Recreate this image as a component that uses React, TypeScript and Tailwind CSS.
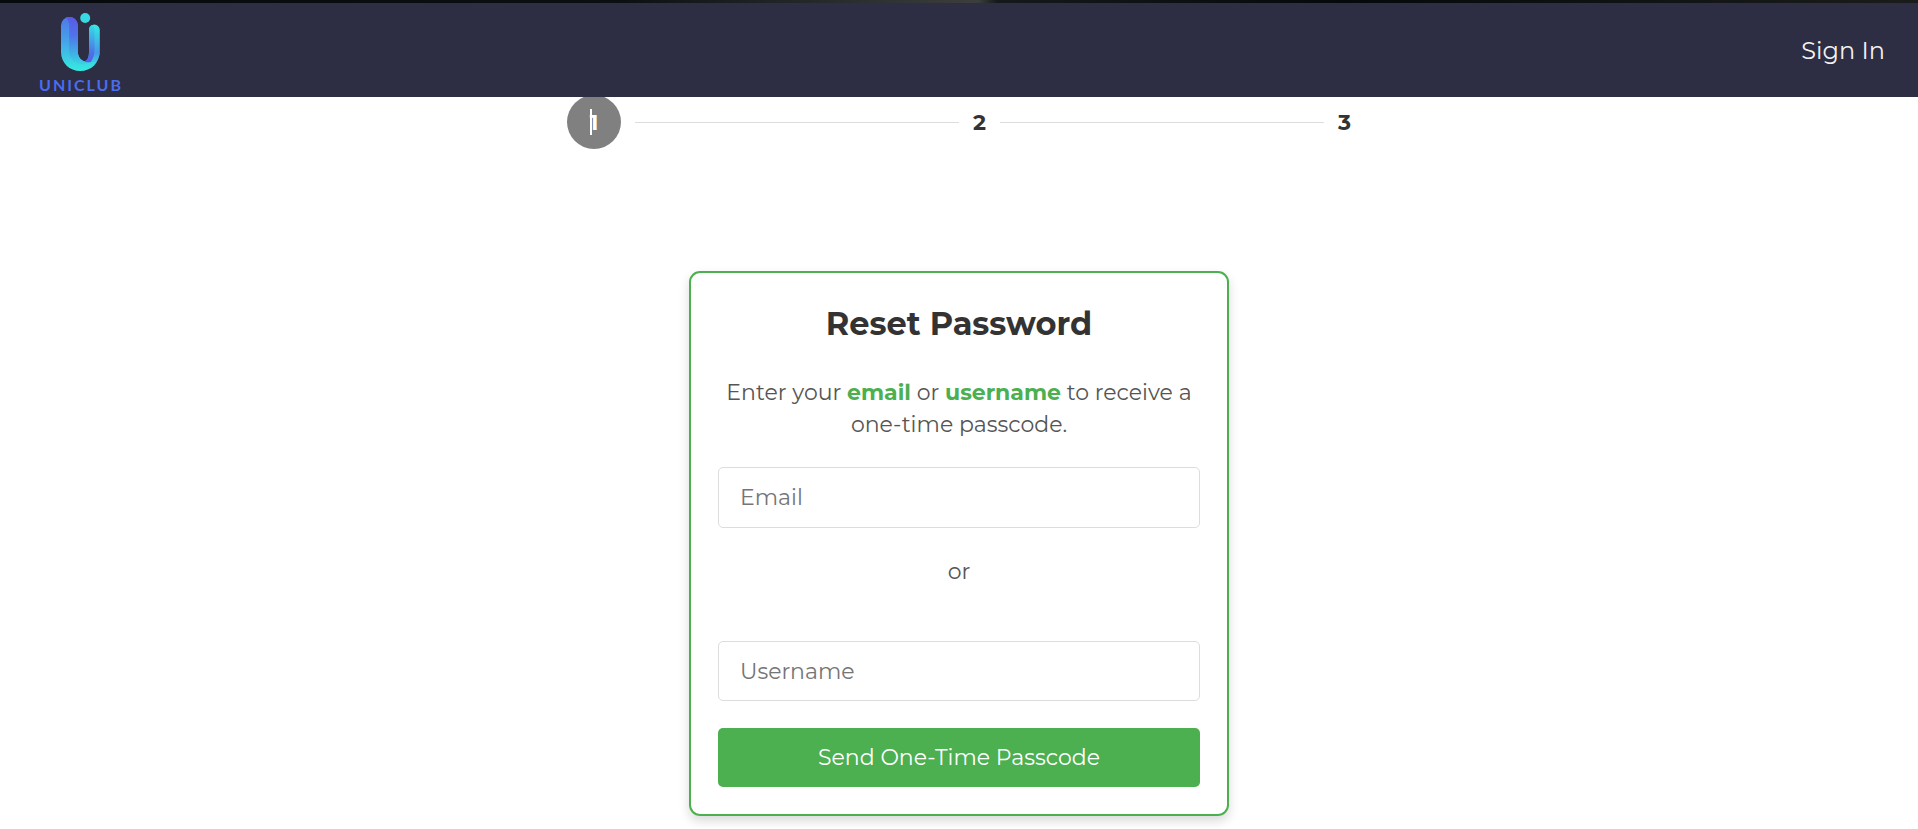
const steps = ["1", "2", "3"];

function Logo() {
  return (
    <a href="#" aria-label="Uniclub home" className="flex flex-col items-center pt-1.5">
      <svg viewBox="0 0 40 58" className="h-[58px] w-10" aria-hidden="true">
        <defs>
          <linearGradient id="body" x1="0" y1="0" x2="0" y2="1">
            <stop offset="0" stopColor="#4f78e8" />
            <stop offset="0.45" stopColor="#45a4e8" />
            <stop offset="1" stopColor="#35ebe0" />
          </linearGradient>
          <linearGradient id="stem" x1="0" y1="0" x2="0" y2="1">
            <stop offset="0" stopColor="#33ece2" />
            <stop offset="0.75" stopColor="#4898e8" />
            <stop offset="1" stopColor="#3cc8e4" />
          </linearGradient>
          <linearGradient id="fold" x1="0" y1="0" x2="0" y2="1">
            <stop offset="0" stopColor="#36dce4" />
            <stop offset="0.75" stopColor="#4f70e8" />
            <stop offset="1" stopColor="#5560e8" />
          </linearGradient>
          <linearGradient id="inner" x1="0" y1="0" x2="0" y2="1">
            <stop offset="0" stopColor="#5a58ea" />
            <stop offset="0.4" stopColor="#4f74e8" />
            <stop offset="1" stopColor="#38d4e4" />
          </linearGradient>
        </defs>
        <path
          d="M1 12.500a8.400 8.400 0 0 1 16.800 0V39c0 5 4 9.500 8 9.500C33 48.500 36 45 39.500 39C39.500 50 31 58 20.300 58S1 50 1 39z"
          fill="url(#body)"
        />
        <path
          d="M6 4.600a8.400 8.400 0 0 1 11.800 8V39c0 5 4 9.500 8 9.500h5C26 52 20 52 16 49.500C11 47 9.200 43 9.200 38V13q0-5-3.200-8.400z"
          fill="url(#inner)"
        />
        <path d="M29 17a5.400 5.400 0 0 1 10.800 0V39c0 4-2 8-5 10h-9c2.500-2 3.200-6 3.200-10z" fill="url(#stem)" />
        <path d="M29 17q0-4 3-5q2.500 2 2.500 6V36c0 7-2 10-3.500 13q-3 .8-6.500-.6C28 46.500 29 43 29 39z" fill="url(#fold)" />
        <circle cx="25.200" cy="5" r="5" fill="#38d8e4" />
      </svg>
      <span className="mt-1 pl-[2px] font-[Lato,sans-serif] text-[16px] leading-[20px] font-bold tracking-[2px] text-[#4a6cf0]">
        UNICLUB
      </span>
    </a>
  );
}

function Stepper() {
  return (
    <ol className="-mt-0.5 flex w-full max-w-[784px] items-center gap-[14px] text-[22px] font-bold">
      {steps.map((step, index) =>
        index === 0 ? (
          <li
            key={step}
            aria-current="step"
            className="relative flex size-[54px] items-center justify-center rounded-full bg-[#808080] text-white"
          >
            {step}
            <span className="absolute top-[14px] left-[23px] h-[26px] w-[2px] bg-white" />
          </li>
        ) : (
          <li key={step} className="flex flex-1 items-center gap-[14px]">
            <span className="h-px flex-1 bg-[#dddddd]" />
            {step}
          </li>
        ),
      )}
    </ol>
  );
}

export default function App() {
  return (
    <div className="bg-white font-[Montserrat,Inter,sans-serif] text-[#333333]">
      <div className="h-[3px] bg-[linear-gradient(90deg,#060a0d_0%,#0b0f12_32%,#3c3e3e_51%,#15191b_52%,#06090b_70%,#1a1c1c_100%)]" />
      <header className="relative z-10 flex h-[94px] items-center justify-between bg-[#2d2d44] pt-0.5 pr-[33px] pl-[37px]">
        <Logo />
        <a href="#" className="text-[24px] text-[#f2f2f2]">
          Sign In
        </a>
      </header>
      <main className="flex flex-col items-center pb-3">
        <Stepper />
        <form className="mt-[122px] w-full max-w-[540px] rounded-[11px] border-2 border-[#4caf50] p-[27px] pt-[29px] text-center text-[22px] leading-[32px] shadow-[0_5px_11px_rgba(0,0,0,0.15)]">
          <h1 className="text-[32px] leading-[44px] font-bold">Reset Password</h1>
          <p className="mt-[31px] text-[#555555]">
            Enter your <strong className="text-[#4caf50]">email</strong> or{" "}
            <strong className="text-[#4caf50]">username</strong> to receive a one-time passcode.
          </p>
          <input
            type="email"
            aria-label="Email"
            placeholder="Email"
            className="mt-[26px] block h-[61px] w-full rounded-[5px] border border-[#dddddd] px-[21px] placeholder:text-[#757575]"
          />
          <p className="mt-7 text-[#555555]">or</p>
          <input
            type="text"
            aria-label="Username"
            placeholder="Username"
            className="mt-[53px] block h-[60px] w-full rounded-[5px] border border-[#dddddd] px-[21px] placeholder:text-[#757575]"
          />
          <button type="submit" className="mt-[27px] block h-[59px] w-full rounded-[5px] bg-[#4caf50] text-white">
            Send One-Time Passcode
          </button>
        </form>
      </main>
    </div>
  );
}
